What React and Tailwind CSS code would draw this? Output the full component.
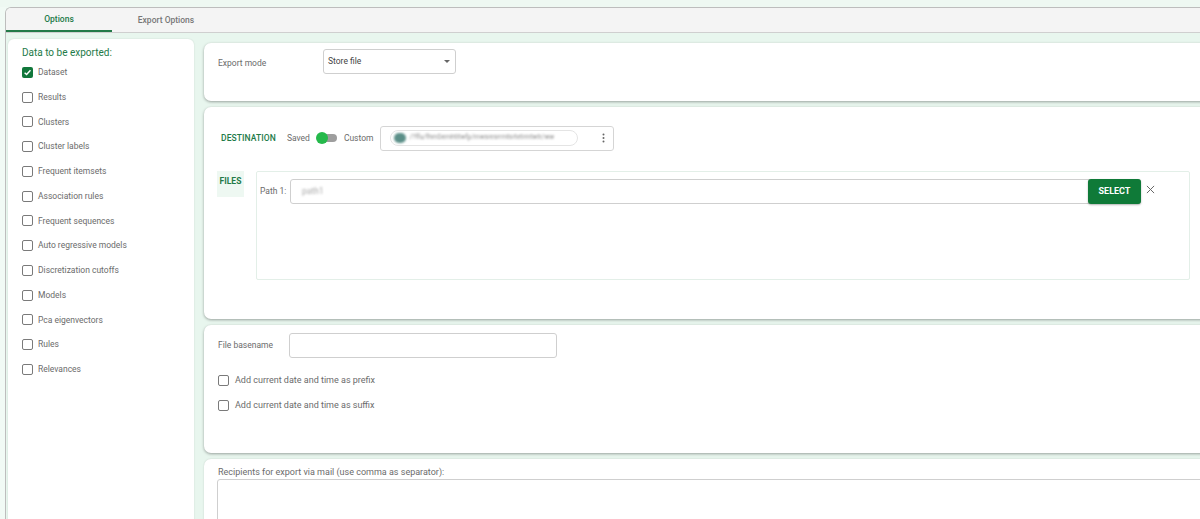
import React from "react";

const items = [
  ["Dataset", true],
  ["Results", false],
  ["Clusters", false],
  ["Cluster labels", false],
  ["Frequent itemsets", false],
  ["Association rules", false],
  ["Frequent sequences", false],
  ["Auto regressive models", false],
  ["Discretization cutoffs", false],
  ["Models", false],
  ["Pca eigenvectors", false],
  ["Rules", false],
  ["Relevances", false],
];

function Box({ checked }) {
  if (checked)
    return (
      <span className="w-[11px] h-[11px] rounded-[2px] bg-[#11773b] flex items-center justify-center shrink-0">
        <svg width="9" height="9" viewBox="0 0 10 10">
          <path d="M1.8 5.2 L4 7.3 L8.3 2.6" stroke="white" strokeWidth="1.6" fill="none" />
        </svg>
      </span>
    );
  return <span className="w-[11px] h-[11px] rounded-[2px] border-[1.5px] border-[#7a7a7a] bg-white shrink-0" />;
}

export default function App() {
  return (
    <div
      className="w-[1200px] h-[519px] overflow-hidden bg-[#f1faf5] flex flex-col"
      style={{ fontFamily: "Roboto, 'Liberation Sans', sans-serif" }}
    >
      <div className="h-[7px] bg-[#eef8f2] shrink-0" />
      <div className="flex-1 flex flex-col ml-[5px] border-l border-t border-[#bdbdbd] rounded-tl-[6px] overflow-hidden">
        <div className="h-[25px] bg-[#f4f4f4] border-b border-[#cfcfcf] flex shrink-0">
          <div className="w-[106px] flex items-center justify-center text-[8.5px] font-medium text-[#237a48] border-b-2 border-[#237a48]">
            Options
          </div>
          <div className="w-[108px] flex items-center justify-center text-[8.5px] font-medium text-[#777]">
            Export Options
          </div>
        </div>
        <div className="flex-1 bg-[#e8f6ee] flex gap-[10px] pt-[6px] pl-[2px]">
          <div className="w-[186px] bg-white rounded-t-[6px] shadow-[0_0_2px_rgba(0,0,0,0.12)] pt-[7px] pl-[14px] shrink-0">
            <div className="text-[10px] text-[#237a48] leading-[13px]">Data to be exported:</div>
            <div className="flex flex-col mt-[1px]">
              {items.map(([label, checked]) => (
                <div key={label} className="h-[24.75px] flex items-center gap-[5px]">
                  <Box checked={checked} />
                  <span className="text-[8.5px] text-[#6b6b6b]">{label}</span>
                </div>
              ))}
            </div>
          </div>

          <div className="flex-1 flex flex-col gap-[6px] pt-[4px] mr-[-12px]">
            {/* Card 1 */}
            <div className="h-[58px] bg-white rounded-[7px] shadow-[0_1px_3px_rgba(0,0,0,0.35)] pl-[14px] pt-[6px] flex items-start shrink-0">
              <span className="text-[8.5px] text-[#6b6b6b] w-[105px] mt-[8px]">Export mode</span>
              <div className="w-[133px] h-[25px] border border-[#cfcfcf] rounded-[3px] flex items-center justify-between px-[4px]">
                <span className="text-[8.5px] text-[#444]">Store file</span>
                <svg width="6" height="4" viewBox="0 0 6 4" className="mr-[1px]">
                  <path d="M0 0 L6 0 L3 3 Z" fill="#666" />
                </svg>
              </div>
            </div>

            {/* Card 2 */}
            <div className="h-[212px] bg-white rounded-[7px] shadow-[0_1px_3px_rgba(0,0,0,0.35)] pl-[13px] pr-[22px] pt-[18px] shrink-0 flex flex-col">
              <div className="flex items-center h-[26px]">
                <span className="text-[8.5px] font-medium text-[#237a48] ml-[4px] tracking-[0.1px]">DESTINATION</span>
                <span className="text-[8.5px] text-[#6b6b6b] ml-[11px]">Saved</span>
                <span className="relative w-[20px] h-[8px] rounded-full bg-[#9e9e9e] ml-[7px]">
                  <span className="absolute left-[-1px] top-[-2px] w-[12px] h-[12px] rounded-full bg-[#25b94b]" />
                </span>
                <span className="text-[8.5px] text-[#6b6b6b] ml-[7px]">Custom</span>
                <div className="ml-[7px] w-[234px] h-[25px] border border-[#d5d5d5] rounded-[3px] flex items-center pl-[9px] pr-[8px]">
                  <div className="w-[188px] h-[16px] rounded-full border border-[#e4e4e4] flex items-center pl-[3px] gap-[3px] overflow-hidden">
                    <span className="w-[12px] h-[10px] rounded-full bg-[#5b8f88] blur-[1.2px]" />
                    <span className="text-[6.5px] text-[#8a8a8a] blur-[0.8px] whitespace-nowrap">/?ffu/fhmDemhtitwfp/rnwsresrrmtsrtetrmtwtr/ww</span>
                  </div>
                  <span className="flex-1" />
                  <svg width="3" height="10" viewBox="0 0 3 10">
                    <circle cx="1.5" cy="1.5" r="1" fill="#666" />
                    <circle cx="1.5" cy="5" r="1" fill="#666" />
                    <circle cx="1.5" cy="8.5" r="1" fill="#666" />
                  </svg>
                </div>
              </div>
              <div className="flex mt-[20px]">
                <div className="w-[27px] h-[26px] bg-[#eef8f2] flex items-start justify-center pt-[4px]">
                  <span className="text-[8.5px] font-bold text-[#237a48]">FILES</span>
                </div>
                <div className="flex-1 ml-[12px] h-[109px] border border-[#e3efe8] rounded-[2px] pt-[7px] pl-[3px] pr-[11px]">
                  <div className="flex items-center">
                    <span className="text-[8.5px] text-[#6b6b6b] w-[30px]">Path 1:</span>
                    <div className="flex-1 h-[25px] border border-[#cfcfcf] rounded-[3px] flex items-center pl-[11px]">
                      <span className="text-[8.5px] text-[#aaa] blur-[0.8px]">path1</span>
                    </div>
                    <button className="ml-[-53px] w-[53px] h-[25px] bg-[#0f7a38] rounded-[3px] text-white text-[9px] font-bold relative shadow-[0_1px_2px_rgba(0,0,0,0.3)]">
                      SELECT
                    </button>
                    <svg width="9" height="9" viewBox="0 0 10 10" className="ml-[5px] mt-[-4px]">
                      <path d="M1 1 L9 9 M9 1 L1 9" stroke="#666" strokeWidth="1.1" />
                    </svg>
                    <span className="w-[23px]" />
                  </div>
                </div>
              </div>
            </div>

            {/* Card 3 */}
            <div className="h-[128px] bg-white rounded-[7px] shadow-[0_1px_3px_rgba(0,0,0,0.35)] pl-[14px] pt-[8px] shrink-0">
              <div className="flex items-center">
                <span className="text-[8.5px] text-[#6b6b6b] w-[71px]">File basename</span>
                <div className="w-[268px] h-[25px] border border-[#cfcfcf] rounded-[3px]" />
              </div>
              <div className="flex items-center gap-[6px] h-[25px] mt-[10px]">
                <Box checked={false} />
                <span className="text-[9px] text-[#6b6b6b]">Add current date and time as prefix</span>
              </div>
              <div className="flex items-center gap-[6px] h-[25px]">
                <Box checked={false} />
                <span className="text-[9px] text-[#6b6b6b]">Add current date and time as suffix</span>
              </div>
            </div>

            {/* Card 4 */}
            <div className="flex-1 bg-white rounded-t-[7px] shadow-[0_0_2px_rgba(0,0,0,0.15)] pl-[13px] pt-[8px]">
              <div className="text-[9px] text-[#6b6b6b] ml-[1px] leading-[11px]">
                Recipients for export via mail (use comma as separator):
              </div>
              <div className="mt-[1px] h-[60px] border border-[#cfcfcf] rounded-[3px]" />
            </div>
          </div>
        </div>
      </div>
    </div>
  );
}
